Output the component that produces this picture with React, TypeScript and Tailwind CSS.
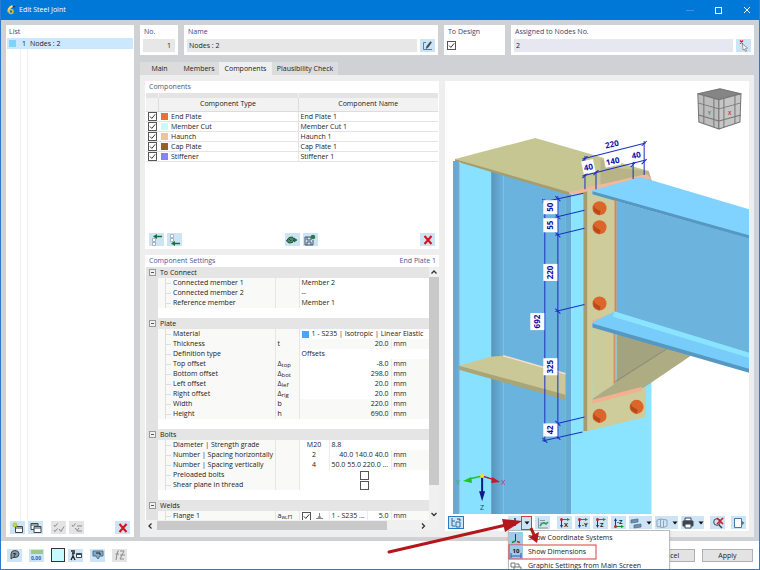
import type { ReactNode } from 'react';

const components = [
  { type: 'End Plate', name: 'End Plate 1', color: '#e2733a' },
  { type: 'Member Cut', name: 'Member Cut 1', color: '#c8fbfd' },
  { type: 'Haunch', name: 'Haunch 1', color: '#efc49c' },
  { type: 'Cap Plate', name: 'Cap Plate 1', color: '#8f6526' },
  { type: 'Stiffener', name: 'Stiffener 1', color: '#8585f2' },
];

const plateDims = [
  { name: 'Top offset', sym: 'Δ', sub: 'top', value: '-8.0' },
  { name: 'Bottom offset', sym: 'Δ', sub: 'bot', value: '298.0' },
  { name: 'Left offset', sym: 'Δ', sub: 'lef', value: '20.0' },
  { name: 'Right offset', sym: 'Δ', sub: 'rig', value: '20.0' },
  { name: 'Width', sym: 'b', value: '220.0', locked: true },
  { name: 'Height', sym: 'h', value: '690.0', locked: true },
];

const bolts = [
  [599, 209],
  [599, 228],
  [599, 304],
  [599, 416],
  [636, 407],
];

const sideDims = [
  { x: 550, y: 208, w: 14, text: '50' },
  { x: 550, y: 226, w: 14, text: '55' },
  { x: 550, y: 273, w: 17, text: '220' },
  { x: 537, y: 322, w: 17, text: '692' },
  { x: 550, y: 367, w: 17, text: '325' },
  { x: 550, y: 430, w: 13, text: '42' },
];

/* ── Small controls ─────────────────────────────────── */

function Check({ label, checked = false }: { label: string; checked?: boolean }) {
  return (
    <span className="inline-grid h-[9px] w-[9px] align-middle">
      <input
        type="checkbox"
        aria-label={label}
        defaultChecked={checked}
        className="peer col-start-1 row-start-1 h-[9px] w-[9px] appearance-none border border-[#555] bg-white"
      />
      <svg viewBox="0 0 9 9" className="pointer-events-none col-start-1 row-start-1 hidden h-[9px] w-[9px] peer-checked:block">
        <path d="M2 4.5 3.8 6.4 7.2 2.4" fill="none" stroke="#333" strokeWidth="1" />
      </svg>
    </span>
  );
}

function IconButton({
  label,
  children,
  disabled = false,
  className = 'w-[15px]',
}: {
  label: string;
  children: ReactNode;
  disabled?: boolean;
  className?: string;
}) {
  return (
    <button
      type="button"
      aria-label={label}
      disabled={disabled}
      className={`flex h-[13px] shrink-0 items-center justify-center ${disabled ? 'bg-[#e4e4e4]' : 'bg-[#cde4f5]'} ${className}`}
    >
      {children}
    </button>
  );
}

function Icon({ children }: { children: ReactNode }) {
  return (
    <svg viewBox="0 0 12 12" className="h-3 w-3 shrink-0" fill="none" stroke="#3c4650" strokeWidth="1">
      {children}
    </svg>
  );
}

function Cross() {
  return (
    <Icon>
      <path d="M2.5 2 9.5 10M9.5 2 2.5 10" stroke="#d90f1c" strokeWidth="2" />
    </Icon>
  );
}

function Caret() {
  return (
    <svg viewBox="0 0 6 4" className="h-1 w-1.5 shrink-0">
      <path d="M0.5 0.5h5L3 3.5z" fill="#111" />
    </svg>
  );
}

/* Two axes from a red origin; the letter names the view direction. */
function AxisIcon({ axis, flip = false }: { axis: string; flip?: boolean }) {
  return (
    <Icon>
      <path d={flip ? 'M2.5 9.5V3' : 'M2.5 2.5V9'} stroke="#17339a" />
      <path d={flip ? 'M2.5 9.5H9' : 'M2.5 2.5H9'} stroke="#1c8a3a" />
      <path d={flip ? 'M1 4 2.5 1 4 4z' : 'M1 8 2.5 11 4 8z'} fill="#17339a" stroke="none" />
      <path d={flip ? 'M8 8 11 9.5 8 11z' : 'M8 1 11 2.5 8 4z'} fill="#1c8a3a" stroke="none" />
      <circle cx="2.5" cy={flip ? 9.5 : 2.5} r="1.5" fill="#c62828" stroke="none" />
      <text x={flip ? 4 : 5} y={flip ? 7 : 10} fontSize="6" fontWeight="700" fill="#222" stroke="none">
        {axis}
      </text>
    </Icon>
  );
}

/* ── Header fields ──────────────────────────────────── */

function Field({ title, className, children }: { title: string; className: string; children: ReactNode }) {
  return (
    <section className={`bg-white px-[3px] pt-px pb-[3px] ${className}`}>
      <h2 className="h-[13px] pl-px leading-[11px] text-[#3d4475]">{title}</h2>
      <div className="flex h-[13px] items-center gap-[3px]">{children}</div>
    </section>
  );
}

function HeaderFields() {
  return (
    <div className="flex gap-[6px]">
      <Field title="No." className="w-[38px]">
        <input aria-label="No." defaultValue="1" className="h-[13px] w-full min-w-0 bg-[#e7e7e7] px-1 text-right" />
      </Field>
      <Field title="Name" className="w-[254px]">
        <input aria-label="Name" defaultValue="Nodes : 2" className="h-[13px] min-w-0 flex-1 bg-[#e7e7e7] px-0.5" />
        <IconButton label="Edit name">
          <Icon>
            <path d="M4 2.5H1.5v7H10" stroke="#5a7f9c" />
            <path d="M4 8.5 5 6 8.5 1.5 9.5 2.5 6 7.5z" fill="#3c4650" strokeWidth="0.5" />
          </Icon>
        </IconButton>
      </Field>
      <Field title="To Design" className="w-[61px]">
        <Check label="To Design" checked />
      </Field>
      <Field title="Assigned to Nodes No." className="flex-1">
        <input aria-label="Assigned to Nodes No." defaultValue="2" className="h-[13px] min-w-0 flex-1 bg-[#e6e7f0] px-0.5" />
        <IconButton label="Select nodes">
          <Icon>
            <path d="M2 0.5 5 3.5M5 0.5 2 3.5" stroke="#d0202a" strokeWidth="1.3" />
            <path d="M4.5 4 9.5 8 7.5 8.5 8.5 11 7.5 11.5 6.3 9 5 10z" fill="#fff" stroke="#777" strokeWidth="0.7" />
          </Icon>
        </IconButton>
      </Field>
    </div>
  );
}

/* ── Left list ──────────────────────────────────────── */

function NodeList() {
  return (
    <section className="flex w-32 shrink-0 flex-col bg-white">
      <h2 className="h-[13px] pt-px pl-[3px] leading-[11px] text-[#3d4475]">List</h2>
      <ul className="mx-px">
        <li className="flex h-[11px] items-center bg-[#cce8ff] pl-0.5 leading-[11px]">
          <span className="h-[7px] w-[7px] bg-[#7fd3f5]" />
          <span className="w-[10px] text-right">1</span>
          <span className="ml-1">Nodes : 2</span>
        </li>
      </ul>
      <div className="ml-[14px] w-2 flex-1 border-x border-[#f0f0f0]" />
      <div className="flex gap-[3px] px-1 pb-[3px]">
        <IconButton label="New joint">
          <Icon>
            <path d="M3.5 4.5h7v6h-7zM3.5 6h7" fill="#fff" />
            <circle cx="3" cy="3" r="2" fill="#c8dc2c" stroke="#7aa020" strokeWidth="0.5" />
          </Icon>
        </IconButton>
        <IconButton label="Copy joint">
          <Icon>
            <path d="M1 1.5h7v6H1zM1 3h7" fill="#fff" />
            <path d="M4 4.5h7v6H4zM4 6h7" fill="#fff" />
          </Icon>
        </IconButton>
        <span className="w-0.5" />
        <IconButton label="Check all" disabled>
          <Icon>
            <path d="M1 3 2 4.5 4.500 1.500M1 8 2 9.500 4.500 6.500M6 7 8 9.500 11 4.500" stroke="#8a8a8a" />
          </Icon>
        </IconButton>
        <IconButton label="Check none" disabled>
          <Icon>
            <path d="M1 3 2 4.5 4.500 1.500M6 4h5M6 9h5M4 6 6 8.500 8 6" stroke="#8a8a8a" />
          </Icon>
        </IconButton>
        <IconButton label="Delete joint" className="ml-auto w-[15px]">
          <Cross />
        </IconButton>
      </div>
    </section>
  );
}

/* ── Components table ───────────────────────────────── */

function ComponentsPanel() {
  return (
    <section className="flex h-[168px] flex-col bg-white">
      <h2 className="h-[12px] pl-1 leading-[11px] text-[#4a5a80]">Components</h2>
      <table className="mx-px table-fixed border-collapse">
        <colgroup>
          <col className="w-[12px]" />
          <col className="w-[140px]" />
          <col />
        </colgroup>
        <thead className="bg-[#f2f2f2]">
          <tr className="h-[5px]">
            <td className="border-r border-[#f2f2f2] bg-[#e4e4e4] p-0" />
            <td className="border-r border-[#f2f2f2] bg-[#e4e4e4] p-0" />
            <td className="bg-[#e4e4e4] p-0" />
          </tr>
          <tr className="h-[13px] border-b border-[#dcdcdc] leading-[12px]">
            <td className="border-r border-[#dcdcdc] p-0" />
            <th className="border-r border-[#dcdcdc] p-0 font-medium">Component Type</th>
            <th className="p-0 font-medium">Component Name</th>
          </tr>
        </thead>
        <tbody>
          {components.map((c) => (
            <tr key={c.name} className="h-[10px] border-b border-[#e4e4e4] leading-[9px]">
              <td className="p-0 text-center leading-0">
                <Check label={c.type} checked />
              </td>
              <td className="border-r border-[#e4e4e4] p-0">
                <span className="flex items-center gap-[3px] pl-[3px]">
                  <span className="h-[7px] w-[7px]" style={{ background: c.color }} />
                  {c.type}
                </span>
              </td>
              <td className="p-0 pl-0.5">{c.name}</td>
            </tr>
          ))}
        </tbody>
      </table>
      <div className="mt-auto flex gap-[3px] px-1 pb-[3px]">
        <IconButton label="Move up">
          <Icon>
            <path d="M1.500 4.500h3v3h-3zM1.500 8.500h3v3h-3z" fill="#fff" stroke="#8f9ca6" strokeWidth="0.7" />
            <path d="M5 2.500h6" stroke="#14713a" strokeWidth="1.500" />
            <path d="M6 0 2 2.500 6 5z" fill="#14713a" stroke="none" />
          </Icon>
        </IconButton>
        <IconButton label="Move down">
          <Icon>
            <path d="M1.500 0.500h3v3h-3zM1.500 4.500h3v3h-3z" fill="#fff" stroke="#8f9ca6" strokeWidth="0.7" />
            <path d="M5 9.500h6" stroke="#14713a" strokeWidth="1.500" />
            <path d="M6 7 2 9.500 6 12z" fill="#14713a" stroke="none" />
          </Icon>
        </IconButton>
        <IconButton label="Library" className="mr-0 ml-auto w-[15px]">
          <Icon>
            <path d="M0.500 7 3 3.500 6.500 3 8 5.500 6.500 8.500 3 9z" fill="#4d8a6c" stroke="#1f4d3a" />
            <path d="M3 5 5 7" stroke="#1f4d3a" />
            <path d="M8 3.500 11.500 6 8 8.500z" fill="#14713a" stroke="none" />
          </Icon>
        </IconButton>
        <IconButton label="Save component" className="mr-auto w-[15px]">
          <Icon>
            <path d="M1 3h6v3H3V3M1 3v8h8V6M3 11V8h4v3" stroke="#455565" />
            <circle cx="9" cy="3" r="2.300" fill="#2c7a4a" stroke="none" />
          </Icon>
        </IconButton>
        <IconButton label="Delete component">
          <Cross />
        </IconButton>
      </div>
    </section>
  );
}

/* ── Settings tree ──────────────────────────────────── */

function SectionRow({ title }: { title: string }) {
  return (
    <tr className="h-[11px] leading-[10px]">
      <td className="bg-[#e2e2e2] p-0">
        <button type="button" aria-label={`Collapse ${title}`} className="mx-auto flex h-[7px] w-[7px] items-center justify-center border border-[#999] bg-[#f0f0f0]">
          <span className="h-px w-[3px] bg-[#555]" />
        </button>
      </td>
      <th colSpan={6} className="bg-[#e5e5e5] p-0 pl-0.5 text-left font-medium">
        {title}
      </th>
    </tr>
  );
}

function SpacerRow() {
  return (
    <tr className="h-[10px]">
      <td className="bg-[#e2e2e2] p-0" />
      <td colSpan={6} className="bg-white p-0" />
    </tr>
  );
}

function Row({ name, sym, sub, children }: { name: string; sym?: string; sub?: string; children: ReactNode }) {
  return (
    <tr className="h-[10px] leading-[10px]">
      <td className="bg-[#e2e2e2] p-0" />
      <td className="border-r border-[#e6e6e4] bg-[#f9f9f7] p-0">
        <span className="flex h-[10px] items-center whitespace-nowrap">
          <span className="ml-[7px] h-full border-l border-[#dedede]" />
          <span className="mr-0.5 w-[5px] border-t border-[#dedede]" />
          {name}
        </span>
      </td>
      <td className="border-r border-[#e6e6e4] bg-[#f9f9f7] p-0 pl-0.5">
        <span className="flex h-[10px] items-center">
          {sym}
          {sub && <span className="pt-0.5 text-[6px]">{sub}</span>}
        </span>
      </td>
      {children}
    </tr>
  );
}

function Amount({ value, locked = false }: { value: string; locked?: boolean }) {
  const bg = locked ? 'bg-[#f9f9f7]' : 'bg-white';
  return (
    <>
      <td colSpan={3} className={`border-r border-[#ececec] p-0 pr-0.5 text-right ${bg}`}>{value}</td>
      <td className="bg-[#f9f9f7] p-0 pl-0.5">mm</td>
    </>
  );
}

function SettingsTable() {
  return (
    <table className="w-full table-fixed border-collapse">
      <colgroup>
        <col className="w-[12px]" />
        <col className="w-[117px]" />
        <col className="w-[24px]" />
        <col className="w-[30px]" />
        <col className="w-[38px]" />
        <col className="w-[24px]" />
        <col />
      </colgroup>
      <tbody>
        <SectionRow title="To Connect" />
        <Row name="Connected member 1">
          <td colSpan={4} className="p-0 pl-0.5">Member 2</td>
        </Row>
        <Row name="Connected member 2">
          <td colSpan={4} className="p-0 pl-0.5">--</td>
        </Row>
        <Row name="Reference member">
          <td colSpan={4} className="p-0 pl-0.5">Member 1</td>
        </Row>
        <SpacerRow />
        <SectionRow title="Plate" />
        <Row name="Material">
          <td colSpan={4} className="p-0 pl-0.5">
            <span className="flex items-center gap-[3px] whitespace-nowrap">
              <span className="h-[7px] w-[7px] bg-[#4aa5f5]" />1 - S235 | Isotropic | Linear Elastic
            </span>
          </td>
        </Row>
        <Row name="Thickness" sym="t">
          <Amount value="20.0" locked />
        </Row>
        <Row name="Definition type">
          <td colSpan={4} className="p-0 pl-0.5">Offsets</td>
        </Row>
        {plateDims.map((d) => (
          <Row key={d.name} name={d.name} sym={d.sym} sub={d.sub}>
            <Amount value={d.value} locked={d.locked} />
          </Row>
        ))}
        <SpacerRow />
        <SectionRow title="Bolts" />
        <Row name="Diameter | Strength grade">
          <td className="border-r border-[#ececec] p-0 text-center">M20</td>
          <td colSpan={3} className="p-0 pl-0.5">8.8</td>
        </Row>
        <Row name="Number | Spacing horizontally">
          <td className="border-r border-[#ececec] p-0 text-center">2</td>
          <td colSpan={2} className="border-r border-[#ececec] p-0 pr-0.5 text-right whitespace-nowrap">40.0 140.0 40.0</td>
          <td className="bg-[#f9f9f7] p-0 pl-0.5">mm</td>
        </Row>
        <Row name="Number | Spacing vertically">
          <td className="border-r border-[#ececec] p-0 text-center">4</td>
          <td colSpan={2} className="border-r border-[#ececec] p-0 pl-0.5 whitespace-nowrap">50.0 55.0 220.0 ...</td>
          <td className="bg-[#f9f9f7] p-0 pl-0.5">mm</td>
        </Row>
        <Row name="Preloaded bolts">
          <td colSpan={4} className="p-0 text-center leading-0"><Check label="Preloaded bolts" /></td>
        </Row>
        <Row name="Shear plane in thread">
          <td colSpan={4} className="p-0 text-center leading-0"><Check label="Shear plane in thread" /></td>
        </Row>
        <SpacerRow />
        <SectionRow title="Welds" />
        <Row name="Flange 1" sym="a" sub="w,f1">
          <td className="border-r border-[#ececec] p-0">
            <span className="flex items-center gap-1 pl-0.5">
              <Check label="Flange 1" checked />
              <svg viewBox="0 0 9 9" className="h-[9px] w-[9px]" fill="none" stroke="#888">
                <path d="M1 6.500h7M4.500 1v5M3 6 4.500 3.500 6 6" />
              </svg>
            </span>
          </td>
          <td className="border-r border-[#ececec] p-0 pl-0.5 whitespace-nowrap">1 - S235 ...</td>
          <td className="border-r border-[#ececec] p-0 pr-0.5 text-right">5.0</td>
          <td className="bg-[#f9f9f7] p-0 pl-0.5">mm</td>
        </Row>
        <Row name="">
          <td colSpan={4} className="p-0 pl-0.5 leading-0"><Check label="Flange 2" /></td>
        </Row>
      </tbody>
    </table>
  );
}

function Chevron({ d }: { d: string }) {
  return (
    <svg viewBox="0 0 8 8" className="h-2 w-2 shrink-0">
      <path d={d} fill="none" stroke="#333" strokeWidth="1.3" />
    </svg>
  );
}

function SettingsPanel() {
  return (
    <section className="flex min-h-0 flex-1 flex-col bg-white">
      <div className="flex h-[12px] shrink-0 justify-between pr-[3px] pl-1 leading-[11px] text-[#50559a]">
        <h2>Component Settings</h2>
        <span>End Plate 1</span>
      </div>
      <div className="flex min-h-0 flex-1">
        <div className="ml-px min-w-0 flex-1 overflow-hidden">
          <SettingsTable />
        </div>
        <div className="flex w-[10px] flex-col items-center bg-[#f0f0f0] pt-px pb-0.5">
          <Chevron d="M1.5 5.5 4 3 6.5 5.5" />
          <span className="mt-px mb-auto h-[83%] w-full bg-[#c9c9c9]" />
          <Chevron d="M1.5 3 4 5.5 6.5 3" />
        </div>
      </div>
      <div className="flex h-[11px] shrink-0 items-center bg-[#f0f0f0] pr-3 pl-px">
        <Chevron d="M5.5 1.5 3 4 5.5 6.5" />
        <span className="mr-auto ml-[3px] h-[9px] w-[82%] bg-[#c9c9c9]" />
        <Chevron d="M3 1.5 5.5 4 3 6.5" />
      </div>
    </section>
  );
}

/* ── 3D view ────────────────────────────────────────── */

function ViewCube() {
  return (
    <g stroke="#757575" strokeWidth="1" strokeLinejoin="round">
      <path d="M697 95 719 90 740 95 718 101z" fill="#858585" />
      <path d="M697 95 718 101V130L698 123z" fill="#bdbdbd" />
      <path d="M740 95 718 101V130L739 123z" fill="#c6c6c6" />
      <path d="M697 104 718 110 740 104M698 116 718 122 740 116M703 97V125M713 100V128M723 100V128M734 97V125" fill="none" />
      <text x="707" y="116" fontSize="5" fontWeight="700" fill="#4d9a63" stroke="none">Y</text>
      <text x="727" y="116" fontSize="5" fontWeight="700" fill="#c2394d" stroke="none">X</text>
    </g>
  );
}

function JointView() {
  return (
    <svg viewBox="445 81 303 434" preserveAspectRatio="xMidYMid slice" className="min-h-0 w-full flex-1">
      <defs>
        <linearGradient id="fillet">
          <stop offset="0" stopColor="#5795bb" />
          <stop offset="1" stopColor="#6ab3de" />
        </linearGradient>
      </defs>

      {/* column */}
      <path d="M453 162h6v353h-6z" fill="#64abd5" />
      <path d="M459 164h32v351h-32z" fill="#88e1ff" />
      <path d="M491 172h12v343h-12z" fill="url(#fillet)" />
      <path d="M503 175h62v340h-62z" fill="#6ab3de" />
      <path d="M565 190h6v325h-6z" fill="#66abd6" />
      <path d="M571 190h80v325h-80z" fill="#8ae4ff" />
      <path d="M459 164v351M565 190v325" stroke="#93a9c9" strokeWidth="1" />

      {/* stiffener */}
      <path d="M459 366 490 357 503 356 565 374V397z" fill="#cbc898" />
      <path d="M459 366 565 395V400L459 370z" fill="#a9a577" />
      <path d="M503 356 565 374" stroke="#f3dfca" strokeWidth="1.5" />

      {/* cap plate */}
      <path d="M455 160 535 139 648 172 651 182 585 192 569 195z" fill="#c6c693" />
      <path d="M455 160 569 193V196L458 163 455 162z" fill="#a59d70" />
      <path d="M600 160 604 161V168L648 172 651 182 600 188z" fill="#b8b487" />
      <path d="M569 193 584 189 646 175 651 180 584 195H569z" fill="#f3b79b" />

      {/* haunch */}
      <path d="M651 382V515H748V200H690V360z" fill="#fff" />
      <path d="M616 330 672 348 616 384z" fill="#a3a47f" />
      <path d="M592 399 613 384 668 347 690 356 643 388 592 402z" fill="#aeac82" />
      <path d="M600 393 613 383 668 348" stroke="#8d8d76" fill="none" />
      <path d="M592 323H613V385L592 399z" fill="#cccb9a" />

      {/* end plate */}
      <path d="M583 193 587 192V431H583z" fill="#a49c6d" />
      <path d="M587 191 615 188V312L592 324V402L645 388V417L587 431z" fill="#cdcc9a" />
      <path d="M592 400 641 387V391L592 404z" fill="#f3b08e" />
      <path d="M613 333h2v50h-2z" fill="#d98c6b" />

      {/* beam */}
      <path d="M592 191 640 178 748 210V237L592 195z" fill="#80d2ff" />
      <path d="M592 192 748 236V240L592 195z" fill="#5698c2" />
      <path d="M616 202 748 239V355L616 313z" fill="#6cb3de" />
      <path d="M614 201h2v112h-2z" fill="#d9825b" />
      <path d="M592 321 614 313V318L592 324z" fill="#f0b093" />
      <path d="M592 323 614 312 748 353V371L592 326z" fill="#78ccfa" />
      <path d="M614 312 748 353V358L612 317z" fill="#8ae4ff" />
      <path d="M592 324 748 369V373L592 328z" fill="#5698c2" />

      {bolts.map(([x, y]) => (
        <g key={`${x}-${y}`}>
          <circle cx={x} cy={y} r="7" fill="#dc652b" />
          <path d={`M${x - 6} ${y - 3} L${x - 6} ${y + 3} L${x} ${y + 7} L${x + 1} ${y + 3} L${x - 4} ${y}z`} fill="#b9491d" />
        </g>
      ))}

      {/* dimension lines */}
      <g stroke="#1c2fc4" strokeWidth="1" fill="none">
        <path d="M544.500 200V442M557.500 197V439" />
        <path d="M542 203 583 194M555 218 584 211M555 236 584 229M555 312 584 305M555 424 584 417M542 441 582 432" />
        <path d="M555 197 560 202M555 215 560 220M555 233 560 238M555 309 560 314M555 421 560 426M542 438 547 443M555 435 560 440M542 200 547 205" />
        <path d="M582 160 645 144M582 177 645 161M584.500 157V190M595.500 172V190M632.500 163V180M643.500 142V176" />
        <path d="M582 162 587 157M641 147 646 142M582 179 587 174M593 176 598 171M630 168 635 163M641 165 646 160" />
      </g>
      <g fontSize="8" fontWeight="700" fill="#1010a8" textAnchor="middle">
        {sideDims.map((d) => (
          <g key={d.text} transform={`translate(${d.x} ${d.y}) rotate(-90)`}>
            <rect x={-d.w / 2} y="-7" width={d.w} height="14" fill="#fff" />
            <text y="3">{d.text}</text>
          </g>
        ))}
        <text transform="translate(612 148) rotate(-12)">220</text>
        <g transform="translate(588 168) rotate(-12)">
          <rect x="-6" y="-7" width="12" height="13" fill="#fff" />
          <text y="3">40</text>
        </g>
        <g transform="translate(612 162) rotate(-12)">
          <rect x="-8" y="-6" width="16" height="11" fill="#fff" />
          <text y="3">140</text>
        </g>
        <text transform="translate(636 159) rotate(-12)">40</text>
      </g>

      {/* axes */}
      <g strokeWidth="1.500" fontSize="8">
        <path d="M482 476 469 479" stroke="#22c322" />
        <path d="M463 481 471 477 472 483z" fill="#22c322" />
        <path d="M482 476 492 479" stroke="#c41a2c" />
        <path d="M500 482 492 477 491 483z" fill="#c41a2c" />
        <path d="M482 476V492" stroke="#0f1a86" strokeWidth="2" />
        <path d="M482 501 479 491H485z" fill="#0f1a86" />
        <circle cx="482" cy="476" r="2" fill="#f2e416" />
        <text x="456" y="485" fontSize="7" fill="#22b34a">Y</text>
        <text x="501" y="485" fontSize="7" fill="#d01a4c">X</text>
        <text x="480" y="510" fontSize="7" fill="#10506a">Z</text>
      </g>

      <ViewCube />
    </svg>
  );
}

/* ── View toolbar with its drop-down ────────────────── */

function MenuItem({ icon, label, active = false }: { icon: ReactNode; label: string; active?: boolean }) {
  return (
    <li>
      <button type="button" role="menuitem" className="flex h-[14px] w-full items-center gap-[5px] whitespace-nowrap">
        <span className={`flex h-[13px] w-[14px] items-center justify-center ${active ? 'bg-[#9ccbee]' : 'bg-white'}`}>{icon}</span>
        {label}
      </button>
    </li>
  );
}

function DisplayMenu() {
  return (
    <ul role="menu" className="absolute top-full left-0 z-10 w-[162px] border border-[#bbb] bg-white pt-px pb-2 shadow-sm">
      <MenuItem
        active
        label="Show Coordinate Systems"
        icon={
          <Icon>
            <path d="M5.500 1v7" stroke="#17339a" />
            <path d="M5.500 8 2 9.500" stroke="#1c8a3a" strokeWidth="1.500" />
            <path d="M7 8.500 10 9.500" stroke="#c62828" strokeWidth="1.500" />
          </Icon>
        }
      />
      <MenuItem
        active
        label="Show Dimensions"
        icon={
          <Icon>
            <path d="M1 6v5M11 6v5M1 9h10" stroke="#2a5da8" />
            <text x="6" y="6" fontSize="6" fontWeight="700" textAnchor="middle" fill="#111" stroke="none">10</text>
          </Icon>
        }
      />
      <MenuItem
        label="Graphic Settings from Main Screen"
        icon={
          <Icon>
            <path d="M1 2h4v4H1zM4 6h7v5H4zM6 3h3v3" stroke="#777" />
          </Icon>
        }
      />
    </ul>
  );
}

function ViewToolbar() {
  return (
    <div className="flex h-[17px] shrink-0 items-center pr-[3px] pl-[3px]">
      <IconButton label="Select view" className="w-4 border border-[#2b78c5]">
        <Icon>
          <path d="M2 1v8h3M2 4h3M6 5h4v5H6z" stroke="#2a6da8" />
          <path d="M7 2h3v2" stroke="#3c4650" />
        </Icon>
      </IconButton>
      <div className="ml-auto flex items-center gap-[3px]">
        <div className="relative flex items-center bg-[#cde4f5]">
          <IconButton label="Display options" className="w-[13px]">
            <Icon>
              <path d="M6 1v8M2 5h8" stroke="#17339a" strokeWidth="1.5" />
            </Icon>
          </IconButton>
          <button type="button" aria-label="Open display menu" aria-expanded="true" className="flex h-[14px] w-[11px] items-center justify-center border border-[#dd3a40]">
            <Caret />
          </button>
          <DisplayMenu />
        </div>
        <IconButton label="Show loads" className="mr-1 w-[15px]">
          <Icon>
            <path d="M1.500 1v10H11" stroke="#8a97a5" />
            <path d="M3 3.500h5M3 6h2" stroke="#8a97a5" />
            <path d="M3 9q3-5 6-2l2-2" stroke="#2f9a4a" strokeWidth="1.500" />
          </Icon>
        </IconButton>
        <IconButton label="View in X"><AxisIcon axis="X" /></IconButton>
        <IconButton label="View in -Y"><AxisIcon axis="-Y" /></IconButton>
        <IconButton label="View in Z"><AxisIcon axis="Z" /></IconButton>
        <IconButton label="View in -Z"><AxisIcon axis="-Z" flip /></IconButton>
        <IconButton label="Render mode" className="w-[23px] gap-1">
          <Icon>
            <path d="M1 3 8 2v3L1 6zM4 8 11 7v3L4 11z" fill="#6f8fae" stroke="#4d6a86" strokeWidth="0.7" />
          </Icon>
          <Caret />
        </IconButton>
        <IconButton label="Box view" className="w-[23px] gap-1">
          <Icon>
            <path d="M1 3 4.500 2 11 3v6L7.500 10.500 1 9.500zM4.500 2v8M7.500 3.500v7" stroke="#8fa3b5" />
          </Icon>
          <Caret />
        </IconButton>
        <IconButton label="Print" className="w-[23px] gap-1">
          <Icon>
            <path d="M3 1h6v3H3z" fill="#fff" />
            <path d="M1 4h10v5H1z" fill="#3c4650" />
            <path d="M3 7h6v4H3z" fill="#fff" />
          </Icon>
          <Caret />
        </IconButton>
        <IconButton label="Clear filter" className="mx-[3px] w-[15px]">
          <Icon>
            <circle cx="5" cy="5" r="3.3" />
            <path d="M7 8 10 11" strokeWidth="1.5" />
            <path d="M5 1 11 7M11 1 5 7" stroke="#d0202a" strokeWidth="1.7" />
          </Icon>
        </IconButton>
        <IconButton label="Detach view">
          <Icon>
            <path d="M1.5 1.5h7v9h-7z" fill="#fff" stroke="#4b79a8" />
            <path d="M8.5 3.5 11.5 6 8.5 8.5z" fill="#4b79a8" stroke="none" />
          </Icon>
        </IconButton>
      </div>
    </div>
  );
}

/* ── Bottom bar ─────────────────────────────────────── */

function Footer() {
  return (
    <footer className="flex h-7 shrink-0 items-center gap-[7px] bg-white px-[6px]">
      <IconButton label="Help">
        <Icon>
          <path d="M2 10V5Q2 1.5 6 1.5 10 1.5 10 5 10 8.5 6 8.5H4z" fill="#8497a5" />
          <text x="4" y="8" fontSize="6" fontWeight="700" fill="#111" stroke="none">?</text>
        </Icon>
      </IconButton>
      <IconButton label="Units">
        <Icon>
          <path d="M0 1h12v4H0z" fill="#9cc88a" stroke="none" />
          <text x="0" y="11" fontSize="5" fontWeight="700" fill="#2261b5" stroke="none">0,00</text>
        </Icon>
      </IconButton>
      <div className="flex items-center gap-[3px]">
        <button type="button" aria-label="Colour" className="h-[14px] w-[14px] border border-[#333] bg-[#c5fbff]" />
        <IconButton label="Display properties">
          <Icon>
            <path d="M1 2h4M2 4h3M3 4v3M1 11 3 7 5 11" stroke="#222" strokeWidth="1.3" />
            <path d="M6.5 4.5h5v4h-5zM6.5 5.5h5" fill="#fff" />
          </Icon>
        </IconButton>
      </div>
      <IconButton label="Show on screen">
        <Icon>
          <path d="M1 2h10v5H8L6 10 4 7H1z" fill="#86a9c4" stroke="#4b6e8c" />
          <path d="M4 4h4v2" stroke="#222" />
        </Icon>
      </IconButton>
      <IconButton label="Formula" disabled>
        <Icon>
          <path d="M5 1.5Q3.5 1 3 5L2 11M1.500 5H5M6 2h4L6 10h4M6 6h5" stroke="#8d8d8d" />
        </Icon>
      </IconButton>
      <div className="ml-auto flex gap-[7px]">
        <button type="button" className="h-[13px] w-[53px] border border-[#b0b0b0] bg-[#e3e3e3] leading-[11px]">Cancel</button>
        <button type="button" className="h-[13px] w-[51px] border border-[#b0b0b0] bg-[#e3e3e3] leading-[11px]">Apply</button>
      </div>
    </footer>
  );
}

export default function App() {
  return (
    <div className="relative flex h-screen flex-col overflow-hidden border-x border-b border-[#2b7cd0] bg-[#d0d1d4] font-['Open_Sans','Noto_Sans',sans-serif] text-[7px] font-medium text-[#222]">
      <header className="flex h-5 shrink-0 items-center bg-[#0078d7] pr-2 pl-[5px] text-white">
        <svg viewBox="0 0 10 10" className="h-[10px] w-[10px]" fill="none">
          <path d="M6.5 1Q2 3 2.5 7" stroke="#f7e08a" strokeWidth="2" />
          <circle cx="5" cy="6.5" r="2" stroke="#f0b429" strokeWidth="1.5" />
          <path d="M7 2 9 1.5" stroke="#222" />
        </svg>
        <h1 className="ml-[3px] leading-4">Edit Steel Joint</h1>
        <div className="ml-auto flex items-center gap-[21px]">
          <button type="button" aria-label="Minimize" className="h-px w-2 bg-[#3d94dd]" />
          <button type="button" aria-label="Maximize" className="h-[7px] w-[7px] border border-white" />
          <button type="button" aria-label="Close">
            <svg viewBox="0 0 8 8" className="h-2 w-2">
              <path d="M1 1 7 7M7 1 1 7" stroke="#fff" />
            </svg>
          </button>
        </div>
      </header>

      <main className="flex min-h-0 flex-1 gap-[6px] px-[5px] pt-[5px] pb-1">
        <NodeList />
        <div className="flex min-w-0 flex-1 flex-col">
          <HeaderFields />
          <nav className="mt-[7px] flex h-[13px] shrink-0 leading-[13px]">
            <button type="button" className="w-[39px] bg-[#dcdcdc]">Main</button>
            <button type="button" className="w-10 bg-[#dcdcdc]">Members</button>
            <button type="button" className="w-[53px] bg-[#efefef]">Components</button>
            <button type="button" className="w-[66px] bg-[#dcdcdc]">Plausibility Check</button>
          </nav>
          <div className="flex min-h-0 flex-1 gap-[6px] bg-[#eeeeee] px-[5px] py-[6px]">
            <div className="flex w-[294px] shrink-0 flex-col gap-[6px]">
              <ComponentsPanel />
              <SettingsPanel />
            </div>
            <section className="flex min-w-0 flex-1 flex-col bg-white">
              <JointView />
              <ViewToolbar />
            </section>
          </div>
        </div>
      </main>

      <Footer />

      {/* callout over the display drop-down */}
      <svg viewBox="380 510 230 60" className="pointer-events-none absolute right-[149px] bottom-0 z-20 h-[60px] w-[230px]">
        <path d="M389 553 506 526" stroke="#b3171c" strokeWidth="3" strokeLinecap="round" />
        <path d="M522 522 502 520 505 533z" fill="#b3171c" />
        <path d="M531 529 534 536" stroke="#b3171c" strokeWidth="3" />
        <path d="M537 544 529 538 539 533z" fill="#b3171c" />
        <rect x="509" y="546" width="87" height="14" fill="none" stroke="#dd3a40" />
      </svg>
    </div>
  );
}
